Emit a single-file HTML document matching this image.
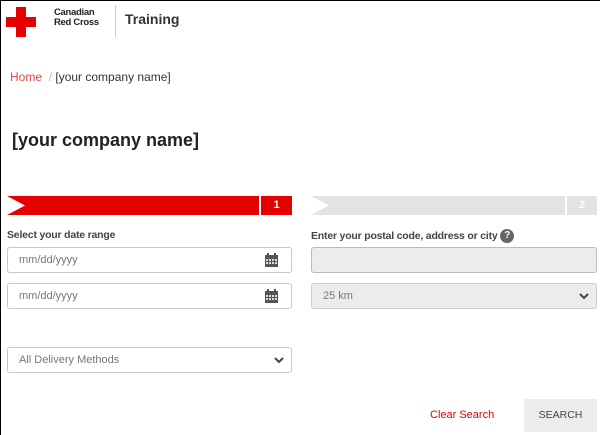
<!DOCTYPE html>
<html><head><style>
*{box-sizing:border-box;margin:0;padding:0}
body{width:600px;height:435px;background:#fff;font-family:"Liberation Sans",sans-serif;position:relative;overflow:hidden}
.a{position:absolute}
.inp{position:absolute;border:1px solid #c8c8c8;border-radius:3px;background:#fff;font-size:11px;color:#777;padding-left:11px;display:flex;align-items:center}
.lbl{position:absolute;font-size:10.5px;font-weight:bold;color:#444;letter-spacing:-0.2px}
.chev{position:absolute;right:7px;top:8px}
</style></head><body>
<div class="a" style="left:0;top:0;width:1px;height:435px;background:#000"></div>
<div class="a" style="left:0;top:0;width:600px;height:1px;background:#000"></div>
<div class="a" style="left:16px;top:7px;width:10px;height:30px;background:#e60000"></div>
<div class="a" style="left:6px;top:17px;width:30px;height:10px;background:#e60000"></div>
<div class="a" style="left:54px;top:8px;font-size:9.5px;font-weight:bold;line-height:10px;color:#222;letter-spacing:-0.3px">Canadian<br>Red Cross</div>
<div class="a" style="left:115px;top:5px;width:1px;height:32px;background:#ccc"></div>
<div class="a" style="left:125px;top:11px;font-size:14px;font-weight:bold;color:#333">Training</div>
<div class="a" style="left:10px;top:70px;font-size:12px;color:#333"><span style="color:#e84545">Home</span> <span style="color:#bbb">&nbsp;/ </span>[your company name]</div>
<div class="a" style="left:12px;top:130px;font-size:18px;font-weight:bold;color:#222">[your company name]</div>

<div class="a" style="left:7px;top:196px;width:252px;height:19px;background:#e60000"></div>
<svg class="a" style="left:7px;top:196px" width="20" height="19"><polygon points="0,0 18,9.5 0,19" fill="#fff"/></svg>
<div class="a" style="left:261px;top:196px;width:31px;height:19px;background:#e60000;color:#fff;font-size:11px;font-weight:bold;text-align:center;line-height:19px">1</div>
<div class="a" style="left:311px;top:196px;width:254px;height:19px;background:#e3e3e3"></div>
<svg class="a" style="left:311px;top:196px" width="20" height="19"><polygon points="0,0 18,9.5 0,19" fill="#fff"/></svg>
<div class="a" style="left:567px;top:196px;width:30px;height:19px;background:#e3e3e3;color:#fff;font-size:11px;font-weight:bold;text-align:center;line-height:19px">2</div>

<div class="lbl" style="left:7px;top:229px">Select your date range</div>
<div class="lbl" style="left:311px;top:229px">Enter your postal code, address or city <span style="display:inline-block;width:14px;height:14px;border-radius:7px;background:#666;color:#fff;font-size:10px;text-align:center;line-height:14px;vertical-align:middle">?</span></div>

<div class="inp" style="left:7px;top:247px;width:285px;height:26px">mm/dd/yyyy
<svg class="a" style="right:12px;top:5px" width="15" height="15"><rect x="1" y="2" width="13" height="12" fill="#555"/><rect x="3" y="0" width="2" height="3" fill="#555"/><rect x="10" y="0" width="2" height="3" fill="#555"/><g fill="#ddd"><rect x="2" y="6" width="2" height="2"/><rect x="5" y="6" width="2" height="2"/><rect x="8" y="6" width="2" height="2"/><rect x="11" y="6" width="2" height="2"/><rect x="2" y="9" width="2" height="2"/><rect x="5" y="9" width="2" height="2"/><rect x="8" y="9" width="2" height="2"/><rect x="11" y="9" width="2" height="2"/></g></svg></div>
<div class="inp" style="left:7px;top:283px;width:285px;height:26px">mm/dd/yyyy
<svg class="a" style="right:12px;top:5px" width="15" height="15"><rect x="1" y="2" width="13" height="12" fill="#555"/><rect x="3" y="0" width="2" height="3" fill="#555"/><rect x="10" y="0" width="2" height="3" fill="#555"/><g fill="#ddd"><rect x="2" y="6" width="2" height="2"/><rect x="5" y="6" width="2" height="2"/><rect x="8" y="6" width="2" height="2"/><rect x="11" y="6" width="2" height="2"/><rect x="2" y="9" width="2" height="2"/><rect x="5" y="9" width="2" height="2"/><rect x="8" y="9" width="2" height="2"/><rect x="11" y="9" width="2" height="2"/></g></svg></div>

<div class="inp" style="left:311px;top:247px;width:286px;height:26px;background:#ececec;border-color:#bbb"></div>
<div class="inp" style="left:311px;top:283px;width:286px;height:26px;background:#ececec;border-color:#ccc">25 km
<svg class="chev" width="10" height="8"><polyline points="1,2 5,6 9,2" fill="none" stroke="#444" stroke-width="2"/></svg></div>

<div class="inp" style="left:7px;top:347px;width:285px;height:26px">All Delivery Methods
<svg class="chev" width="10" height="8"><polyline points="1,2 5,6 9,2" fill="none" stroke="#444" stroke-width="2"/></svg></div>

<div class="a" style="left:430px;top:409px;font-size:11px;color:#e60000">Clear Search</div>
<div class="a" style="left:524px;top:399px;width:73px;height:33px;background:#ececec;color:#444;font-size:10.5px;text-align:center;line-height:33px">SEARCH</div>
</body></html>
